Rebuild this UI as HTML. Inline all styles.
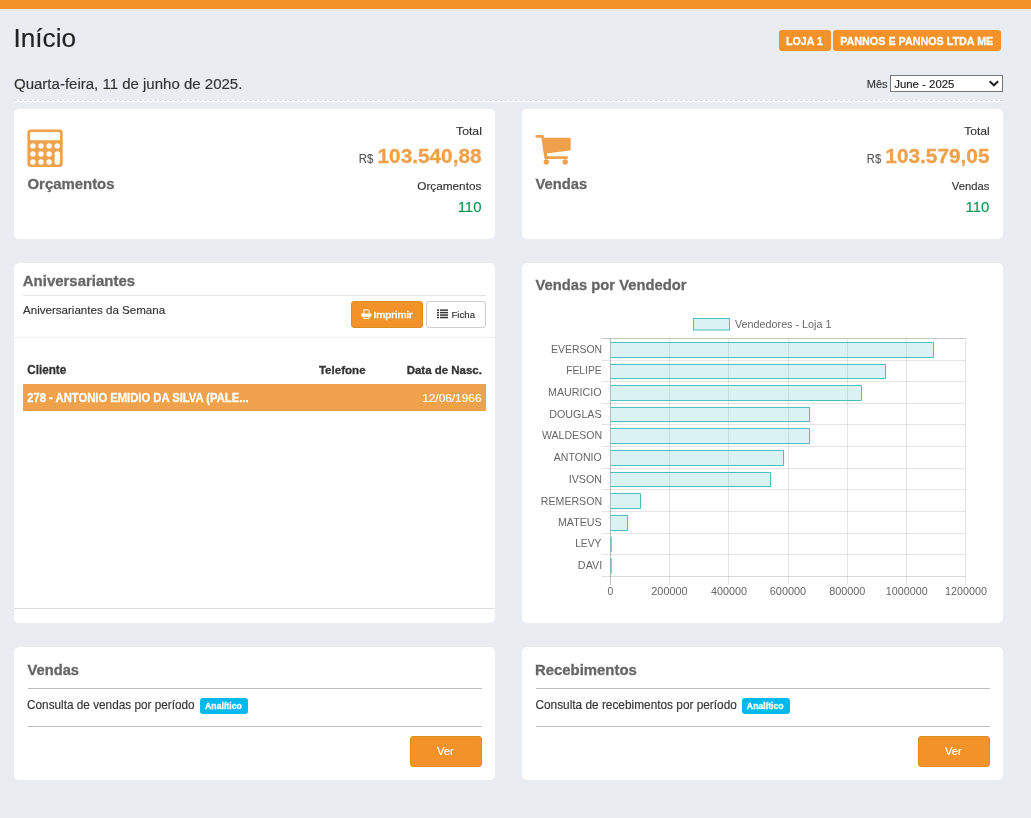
<!DOCTYPE html>
<html lang="pt-BR"><head><meta charset="utf-8"><title>Início</title>
<style>
html,body{margin:0;padding:0}
body{width:1031px;height:818px;overflow:hidden;background:#e9edf1;font-family:"Liberation Sans",sans-serif;position:relative}
.abs{position:absolute}
.card{position:absolute;background:#fff;border-radius:5px}
.ln{position:absolute;height:1px}
</style></head><body>
<div class="abs" style="left:0;top:0;width:1031px;height:9px;background:#f39229"></div>
<div class="abs" style="left:779px;top:30px;width:52px;height:21px;background:#f39229;border-radius:3px"></div>
<div class="abs" style="left:833px;top:30px;width:168px;height:21px;background:#f39229;border-radius:3px"></div>
<div class="abs" style="left:890px;top:75px;width:111px;height:15px;background:#fff;border:1px solid #767676"></div>
<svg class="abs" style="left:988px;top:78px" width="12" height="10"><path d="M1.6 3.3L5.9 7.3L10.1 3.3" fill="none" stroke="#222" stroke-width="2"/></svg>
<div class="abs" style="left:14px;top:100px;width:989px;height:2px;background:#fff"></div><div class="abs" style="left:14px;top:100px;width:989px;height:0;border-top:1px dashed #d5d9dd"></div>
<div class="card" style="left:14px;top:109px;width:481px;height:130px"></div>
<div class="card" style="left:522px;top:109px;width:481px;height:130px"></div>
<div class="card" style="left:14px;top:263px;width:481px;height:360px"></div>
<div class="card" style="left:522px;top:263px;width:481px;height:360px"></div>
<div class="card" style="left:14px;top:647px;width:481px;height:133px"></div>
<div class="card" style="left:522px;top:647px;width:481px;height:133px"></div>
<div class="ln" style="left:23px;top:295px;width:463px;background:#e3e3e3"></div>
<div class="ln" style="left:14px;top:337px;width:481px;background:#eeeeee"></div>
<div class="ln" style="left:14px;top:608px;width:481px;background:#dddddd"></div>
<div class="abs" style="left:351px;top:301px;width:70px;height:25px;background:#f39229;border:1px solid #e08e1b;border-radius:3px"></div>
<div class="abs" style="left:426px;top:301px;width:58px;height:25px;background:#fff;border:1px solid #cccccc;border-radius:3px"></div>
<div class="abs" style="left:23px;top:384px;width:463px;height:27px;background:#efa14b"></div>
<div class="ln" style="left:28px;top:688px;width:454px;background:#bbbbbb"></div>
<div class="ln" style="left:28px;top:726px;width:454px;background:#bbbbbb"></div>
<div class="ln" style="left:536px;top:688px;width:454px;background:#bbbbbb"></div>
<div class="ln" style="left:536px;top:726px;width:454px;background:#bbbbbb"></div>
<div class="abs" style="left:200px;top:698px;width:48px;height:16px;background:#00b9ee;border-radius:3px"></div>
<div class="abs" style="left:742px;top:698px;width:48px;height:16px;background:#00b9ee;border-radius:3px"></div>
<div class="abs" style="left:410px;top:736px;width:70px;height:29px;background:#f39229;border:1px solid #e08e1b;border-radius:3px"></div>
<div class="abs" style="left:918px;top:736px;width:70px;height:29px;background:#f39229;border:1px solid #e08e1b;border-radius:3px"></div>
<svg width="1031" height="818" style="position:absolute;left:0;top:0;will-change:transform" font-family="Liberation Sans, sans-serif"><text x="13.56" y="47.00" font-size="25.75" font-weight="normal" fill="#222" stroke="#222" stroke-width="0.15" textLength="62.50" lengthAdjust="spacingAndGlyphs">Início</text><text x="14.00" y="88.60" font-size="14.08" font-weight="normal" fill="#333" stroke="#333" stroke-width="0.15" textLength="228.36" lengthAdjust="spacingAndGlyphs">Quarta-feira, 11 de junho de 2025.</text><text x="786.04" y="44.80" font-size="11.66" font-weight="bold" fill="#fff" stroke="#fff" stroke-width="0.3" textLength="37.02" lengthAdjust="spacingAndGlyphs">LOJA 1</text><text x="840.23" y="44.70" font-size="11.81" font-weight="bold" fill="#fff" stroke="#fff" stroke-width="0.3" textLength="153.05" lengthAdjust="spacingAndGlyphs">PANNOS E PANNOS LTDA ME</text><text x="866.74" y="87.70" font-size="11.38" font-weight="normal" fill="#333" stroke="#333" stroke-width="0.15" textLength="20.80" lengthAdjust="spacingAndGlyphs">Mês</text><text x="894.22" y="87.70" font-size="11.38" font-weight="normal" fill="#222" stroke="#222" stroke-width="0.15" textLength="60.24" lengthAdjust="spacingAndGlyphs">June - 2025</text><text x="456.01" y="134.70" font-size="11.66" font-weight="normal" fill="#333333" stroke="#333333" stroke-width="0.15" textLength="25.90" lengthAdjust="spacingAndGlyphs">Total</text><text x="358.71" y="162.80" font-size="13.51" font-weight="normal" fill="#555" stroke="#555" stroke-width="0.15" textLength="14.60" lengthAdjust="spacingAndGlyphs">R$</text><text x="377.50" y="162.80" font-size="19.91" font-weight="bold" fill="#efa14b" stroke="#efa14b" stroke-width="0.3" textLength="104.12" lengthAdjust="spacingAndGlyphs">103.540,88</text><text x="417.25" y="189.50" font-size="10.95" font-weight="normal" fill="#333333" stroke="#333333" stroke-width="0.15" textLength="64.12" lengthAdjust="spacingAndGlyphs">Orçamentos</text><text x="457.67" y="211.90" font-size="15.36" font-weight="normal" fill="#089650" stroke="#089650" stroke-width="0.15" textLength="23.81" lengthAdjust="spacingAndGlyphs">110</text><text x="27.53" y="189.00" font-size="15.22" font-weight="bold" fill="#666666" stroke="#666666" stroke-width="0.3" textLength="86.97" lengthAdjust="spacingAndGlyphs">Orçamentos</text><text x="964.21" y="134.70" font-size="11.66" font-weight="normal" fill="#333333" stroke="#333333" stroke-width="0.15" textLength="25.59" lengthAdjust="spacingAndGlyphs">Total</text><text x="866.83" y="162.80" font-size="13.51" font-weight="normal" fill="#555" stroke="#555" stroke-width="0.15" textLength="14.28" lengthAdjust="spacingAndGlyphs">R$</text><text x="885.30" y="162.80" font-size="19.91" font-weight="bold" fill="#efa14b" stroke="#efa14b" stroke-width="0.3" textLength="104.22" lengthAdjust="spacingAndGlyphs">103.579,05</text><text x="951.80" y="189.50" font-size="10.95" font-weight="normal" fill="#333333" stroke="#333333" stroke-width="0.15" textLength="37.55" lengthAdjust="spacingAndGlyphs">Vendas</text><text x="965.57" y="211.90" font-size="15.36" font-weight="normal" fill="#089650" stroke="#089650" stroke-width="0.15" textLength="23.81" lengthAdjust="spacingAndGlyphs">110</text><text x="535.50" y="188.70" font-size="15.22" font-weight="bold" fill="#666666" stroke="#666666" stroke-width="0.3" textLength="51.70" lengthAdjust="spacingAndGlyphs">Vendas</text><text x="22.77" y="286.10" font-size="14.37" font-weight="bold" fill="#666666" stroke="#666666" stroke-width="0.3" textLength="112.34" lengthAdjust="spacingAndGlyphs">Aniversariantes</text><text x="23.00" y="313.90" font-size="11.24" font-weight="normal" fill="#333333" stroke="#333333" stroke-width="0.15" textLength="142.13" lengthAdjust="spacingAndGlyphs">Aniversariantes da Semana</text><text x="373.15" y="317.80" font-size="9.82" font-weight="normal" fill="#fff" stroke="#fff" stroke-width="0.45" textLength="39.41" lengthAdjust="spacingAndGlyphs">Imprimir</text><text x="451.44" y="317.60" font-size="9.53" font-weight="normal" fill="#333" stroke="#333" stroke-width="0.15" textLength="23.70" lengthAdjust="spacingAndGlyphs">Ficha</text><text x="27.23" y="374.10" font-size="12.94" font-weight="bold" fill="#333333" stroke="#333333" stroke-width="0.3" textLength="39.06" lengthAdjust="spacingAndGlyphs">Cliente</text><text x="318.90" y="373.90" font-size="11.24" font-weight="bold" fill="#333333" stroke="#333333" stroke-width="0.3" textLength="46.69" lengthAdjust="spacingAndGlyphs">Telefone</text><text x="406.68" y="373.90" font-size="11.24" font-weight="bold" fill="#333333" stroke="#333333" stroke-width="0.3" textLength="75.19" lengthAdjust="spacingAndGlyphs">Data de Nasc.</text><text x="27.25" y="402.30" font-size="12.94" font-weight="bold" fill="#fff" stroke="#fff" stroke-width="0.3" textLength="221.31" lengthAdjust="spacingAndGlyphs">278 - ANTONIO EMIDIO DA SILVA (PALE...</text><text x="422.16" y="401.90" font-size="11.52" font-weight="normal" fill="#fff" stroke="#fff" stroke-width="0.15" textLength="59.32" lengthAdjust="spacingAndGlyphs">12/06/1966</text><text x="535.50" y="290.00" font-size="15.36" font-weight="bold" fill="#666666" stroke="#666666" stroke-width="0.3" textLength="150.91" lengthAdjust="spacingAndGlyphs">Vendas por Vendedor</text><text x="27.60" y="674.60" font-size="14.65" font-weight="bold" fill="#666666" stroke="#666666" stroke-width="0.3" textLength="51.39" lengthAdjust="spacingAndGlyphs">Vendas</text><text x="27.05" y="709.20" font-size="12.23" font-weight="normal" fill="#333333" stroke="#333333" stroke-width="0.15" textLength="167.63" lengthAdjust="spacingAndGlyphs">Consulta de vendas por período</text><text x="205.06" y="708.80" font-size="9.10" font-weight="bold" fill="#fff" stroke="#fff" stroke-width="0.3" textLength="36.82" lengthAdjust="spacingAndGlyphs">Analítico</text><text x="437.00" y="754.80" font-size="11.66" font-weight="normal" fill="#fff" stroke="#fff" stroke-width="0.15" textLength="16.85" lengthAdjust="spacingAndGlyphs">Ver</text><text x="534.97" y="674.60" font-size="14.65" font-weight="bold" fill="#666666" stroke="#666666" stroke-width="0.3" textLength="101.83" lengthAdjust="spacingAndGlyphs">Recebimentos</text><text x="535.44" y="709.20" font-size="12.23" font-weight="normal" fill="#333333" stroke="#333333" stroke-width="0.15" textLength="201.44" lengthAdjust="spacingAndGlyphs">Consulta de recebimentos por período</text><text x="746.86" y="708.80" font-size="9.10" font-weight="bold" fill="#fff" stroke="#fff" stroke-width="0.3" textLength="36.82" lengthAdjust="spacingAndGlyphs">Analítico</text><text x="945.00" y="754.80" font-size="11.66" font-weight="normal" fill="#fff" stroke="#fff" stroke-width="0.15" textLength="16.85" lengthAdjust="spacingAndGlyphs">Ver</text><text x="551.09" y="353.20" font-size="11.10" font-weight="normal" fill="#666666" stroke="#666666" stroke-width="0" textLength="50.96" lengthAdjust="spacingAndGlyphs">EVERSON</text><text x="566.20" y="374.00" font-size="10.81" font-weight="normal" fill="#666666" stroke="#666666" stroke-width="0" textLength="35.44" lengthAdjust="spacingAndGlyphs">FELIPE</text><text x="548.06" y="396.00" font-size="10.81" font-weight="normal" fill="#666666" stroke="#666666" stroke-width="0" textLength="53.60" lengthAdjust="spacingAndGlyphs">MAURICIO</text><text x="549.26" y="417.50" font-size="11.10" font-weight="normal" fill="#666666" stroke="#666666" stroke-width="0" textLength="52.39" lengthAdjust="spacingAndGlyphs">DOUGLAS</text><text x="542.00" y="439.30" font-size="10.81" font-weight="normal" fill="#666666" stroke="#666666" stroke-width="0" textLength="60.06" lengthAdjust="spacingAndGlyphs">WALDESON</text><text x="553.80" y="461.40" font-size="10.53" font-weight="normal" fill="#666666" stroke="#666666" stroke-width="0" textLength="47.86" lengthAdjust="spacingAndGlyphs">ANTONIO</text><text x="568.76" y="482.90" font-size="10.67" font-weight="normal" fill="#666666" stroke="#666666" stroke-width="0" textLength="33.31" lengthAdjust="spacingAndGlyphs">IVSON</text><text x="540.87" y="504.80" font-size="10.81" font-weight="normal" fill="#666666" stroke="#666666" stroke-width="0" textLength="61.19" lengthAdjust="spacingAndGlyphs">REMERSON</text><text x="557.97" y="525.80" font-size="10.67" font-weight="normal" fill="#666666" stroke="#666666" stroke-width="0" textLength="43.68" lengthAdjust="spacingAndGlyphs">MATEUS</text><text x="575.20" y="547.40" font-size="10.38" font-weight="normal" fill="#666666" stroke="#666666" stroke-width="0" textLength="26.11" lengthAdjust="spacingAndGlyphs">LEVY</text><text x="577.86" y="568.90" font-size="10.95" font-weight="normal" fill="#666666" stroke="#666666" stroke-width="0" textLength="24.31" lengthAdjust="spacingAndGlyphs">DAVI</text><text x="607.57" y="594.80" font-size="10.67" font-weight="normal" fill="#666666" stroke="#666666" stroke-width="0" textLength="5.78" lengthAdjust="spacingAndGlyphs">0</text><text x="651.29" y="594.80" font-size="10.67" font-weight="normal" fill="#666666" stroke="#666666" stroke-width="0" textLength="36.38" lengthAdjust="spacingAndGlyphs">200000</text><text x="710.93" y="594.80" font-size="10.67" font-weight="normal" fill="#666666" stroke="#666666" stroke-width="0" textLength="36.04" lengthAdjust="spacingAndGlyphs">400000</text><text x="769.79" y="594.80" font-size="10.67" font-weight="normal" fill="#666666" stroke="#666666" stroke-width="0" textLength="36.38" lengthAdjust="spacingAndGlyphs">600000</text><text x="829.16" y="594.80" font-size="10.67" font-weight="normal" fill="#666666" stroke="#666666" stroke-width="0" textLength="36.21" lengthAdjust="spacingAndGlyphs">800000</text><text x="885.88" y="594.80" font-size="10.67" font-weight="normal" fill="#666666" stroke="#666666" stroke-width="0" textLength="41.84" lengthAdjust="spacingAndGlyphs">1000000</text><text x="945.08" y="594.80" font-size="10.67" font-weight="normal" fill="#666666" stroke="#666666" stroke-width="0" textLength="41.84" lengthAdjust="spacingAndGlyphs">1200000</text><text x="735.00" y="327.90" font-size="11.10" font-weight="normal" fill="#666666" stroke="#666666" stroke-width="0" textLength="96.44" lengthAdjust="spacingAndGlyphs">Vendedores - Loja 1</text><line x1="601.5" x2="965.5" y1="338.5" y2="338.5" stroke="rgba(0,0,0,0.22)" stroke-width="1"/><line x1="601.5" x2="965.5" y1="360.5" y2="360.5" stroke="rgba(0,0,0,0.1)" stroke-width="1"/><line x1="601.5" x2="965.5" y1="381.5" y2="381.5" stroke="rgba(0,0,0,0.1)" stroke-width="1"/><line x1="601.5" x2="965.5" y1="403.5" y2="403.5" stroke="rgba(0,0,0,0.1)" stroke-width="1"/><line x1="601.5" x2="965.5" y1="424.5" y2="424.5" stroke="rgba(0,0,0,0.1)" stroke-width="1"/><line x1="601.5" x2="965.5" y1="446.5" y2="446.5" stroke="rgba(0,0,0,0.1)" stroke-width="1"/><line x1="601.5" x2="965.5" y1="468.5" y2="468.5" stroke="rgba(0,0,0,0.1)" stroke-width="1"/><line x1="601.5" x2="965.5" y1="489.5" y2="489.5" stroke="rgba(0,0,0,0.1)" stroke-width="1"/><line x1="601.5" x2="965.5" y1="511.5" y2="511.5" stroke="rgba(0,0,0,0.1)" stroke-width="1"/><line x1="601.5" x2="965.5" y1="533.5" y2="533.5" stroke="rgba(0,0,0,0.1)" stroke-width="1"/><line x1="601.5" x2="965.5" y1="554.5" y2="554.5" stroke="rgba(0,0,0,0.1)" stroke-width="1"/><line x1="601.5" x2="965.5" y1="576.5" y2="576.5" stroke="rgba(0,0,0,0.14)" stroke-width="1"/><line x1="610.5" x2="610.5" y1="338.5" y2="585" stroke="rgba(0,0,0,0.25)" stroke-width="1"/><line x1="669.5" x2="669.5" y1="338.5" y2="585" stroke="rgba(0,0,0,0.1)" stroke-width="1"/><line x1="728.5" x2="728.5" y1="338.5" y2="585" stroke="rgba(0,0,0,0.1)" stroke-width="1"/><line x1="788.5" x2="788.5" y1="338.5" y2="585" stroke="rgba(0,0,0,0.1)" stroke-width="1"/><line x1="847.5" x2="847.5" y1="338.5" y2="585" stroke="rgba(0,0,0,0.1)" stroke-width="1"/><line x1="906.5" x2="906.5" y1="338.5" y2="585" stroke="rgba(0,0,0,0.1)" stroke-width="1"/><line x1="965.5" x2="965.5" y1="338.5" y2="585" stroke="rgba(0,0,0,0.1)" stroke-width="1"/><rect x="610.5" y="342.03" width="323.10" height="15.57" fill="rgba(75,192,192,0.2)"/><path d="M610.5 342.5H933.5V357.5H610.5" fill="none" stroke="rgb(75,192,192)" stroke-width="1"/><rect x="610.5" y="363.64" width="275.90" height="15.57" fill="rgba(75,192,192,0.2)"/><path d="M610.5 364.5H885.5V378.5H610.5" fill="none" stroke="rgb(75,192,192)" stroke-width="1"/><rect x="610.5" y="385.26" width="251.20" height="15.57" fill="rgba(75,192,192,0.2)"/><path d="M610.5 385.5H861.5V400.5H610.5" fill="none" stroke="rgb(75,192,192)" stroke-width="1"/><rect x="610.5" y="406.88" width="200.00" height="15.57" fill="rgba(75,192,192,0.2)"/><path d="M610.5 407.5H809.5V421.5H610.5" fill="none" stroke="rgb(75,192,192)" stroke-width="1"/><rect x="610.5" y="428.50" width="200.00" height="15.57" fill="rgba(75,192,192,0.2)"/><path d="M610.5 428.5H809.5V443.5H610.5" fill="none" stroke="rgb(75,192,192)" stroke-width="1"/><rect x="610.5" y="450.12" width="173.90" height="15.57" fill="rgba(75,192,192,0.2)"/><path d="M610.5 450.5H783.5V465.5H610.5" fill="none" stroke="rgb(75,192,192)" stroke-width="1"/><rect x="610.5" y="471.74" width="160.70" height="15.57" fill="rgba(75,192,192,0.2)"/><path d="M610.5 472.5H770.5V486.5H610.5" fill="none" stroke="rgb(75,192,192)" stroke-width="1"/><rect x="610.5" y="493.35" width="30.50" height="15.57" fill="rgba(75,192,192,0.2)"/><path d="M610.5 493.5H640.5V508.5H610.5" fill="none" stroke="rgb(75,192,192)" stroke-width="1"/><rect x="610.5" y="514.97" width="17.90" height="15.57" fill="rgba(75,192,192,0.2)"/><path d="M610.5 515.5H627.5V530.5H610.5" fill="none" stroke="rgb(75,192,192)" stroke-width="1"/><rect x="610.5" y="536.59" width="1.00" height="15.57" fill="rgba(75,192,192,0.2)"/><rect x="610.5" y="536.59" width="1.20" height="15.57" fill="rgb(75,192,192)"/><rect x="610.5" y="558.21" width="0.30" height="15.57" fill="rgba(75,192,192,0.2)"/><rect x="610.5" y="558.21" width="1.20" height="15.57" fill="rgb(75,192,192)"/><rect x="693.5" y="318.5" width="36" height="11.5" fill="rgba(75,192,192,0.2)" stroke="rgb(75,192,192)" stroke-width="1"/><g fill="#efa14b">
<path fill-rule="evenodd" d="M30.4 129.4H59.7Q62.7 129.4 62.7 132.4V164.1Q62.7 167.1 59.7 167.1H30.4Q27.4 167.1 27.4 164.1V132.4Q27.4 129.4 30.4 129.4Z
M31.6 132.1H58.8Q60 132.1 60 133.3V139Q60 140.2 58.8 140.2H31.6Q30.1 140.2 30.1 139V133.3Q30.1 132.1 31.6 132.1Z"/>
</g><circle cx="32.9" cy="145.9" r="2.7" fill="#fff"/><circle cx="32.9" cy="154.0" r="2.7" fill="#fff"/><circle cx="32.9" cy="162.0" r="2.7" fill="#fff"/><circle cx="41.0" cy="145.9" r="2.7" fill="#fff"/><circle cx="41.0" cy="154.0" r="2.7" fill="#fff"/><circle cx="41.0" cy="162.0" r="2.7" fill="#fff"/><circle cx="49.1" cy="145.9" r="2.7" fill="#fff"/><circle cx="49.1" cy="154.0" r="2.7" fill="#fff"/><circle cx="49.1" cy="162.0" r="2.7" fill="#fff"/><circle cx="57.2" cy="145.9" r="2.7" fill="#fff"/><rect x="54.6" y="151.3" width="5.4" height="13.4" rx="2.7" fill="#fff"/><g transform="translate(500,0)"><g fill="#efa14b">
<path d="M36.8 135.1H42.6Q43.6 135.1 43.9 136.3L44.2 137.8H69.4Q70.7 137.8 70.7 139.1V149.3Q70.7 150.4 69.6 150.6L46.8 153.6L47.4 156.3H66.6Q68 156.3 68 157.65Q68 159 66.6 159H45.8Q44.5 159 44.3 157.9L41.4 137.8H36.8Q35.4 137.8 35.4 136.45Q35.4 135.1 36.8 135.1Z"/>
<circle cx="46.3" cy="162.0" r="2.7"/><circle cx="65.2" cy="162.0" r="2.7"/>
</g></g><g fill="none" stroke="#fff" stroke-width="1">
<path d="M363.8 313.8V309.8H368.4L369.1 310.6V313.8"/>
<path d="M363.8 316.4V318.4H369V316.4"/>
</g><rect x="361.3" y="313.5" width="10.2" height="3.2" rx="1" fill="#fff"/><g fill="#333"><rect x="437" y="309.40" width="2" height="1.45"/><rect x="440" y="309.40" width="8" height="1.45"/><rect x="437" y="311.87" width="2" height="1.45"/><rect x="440" y="311.87" width="8" height="1.45"/><rect x="437" y="314.34" width="2" height="1.45"/><rect x="440" y="314.34" width="8" height="1.45"/><rect x="437" y="316.81" width="2" height="1.45"/><rect x="440" y="316.81" width="8" height="1.45"/></g></svg>
</body></html>
